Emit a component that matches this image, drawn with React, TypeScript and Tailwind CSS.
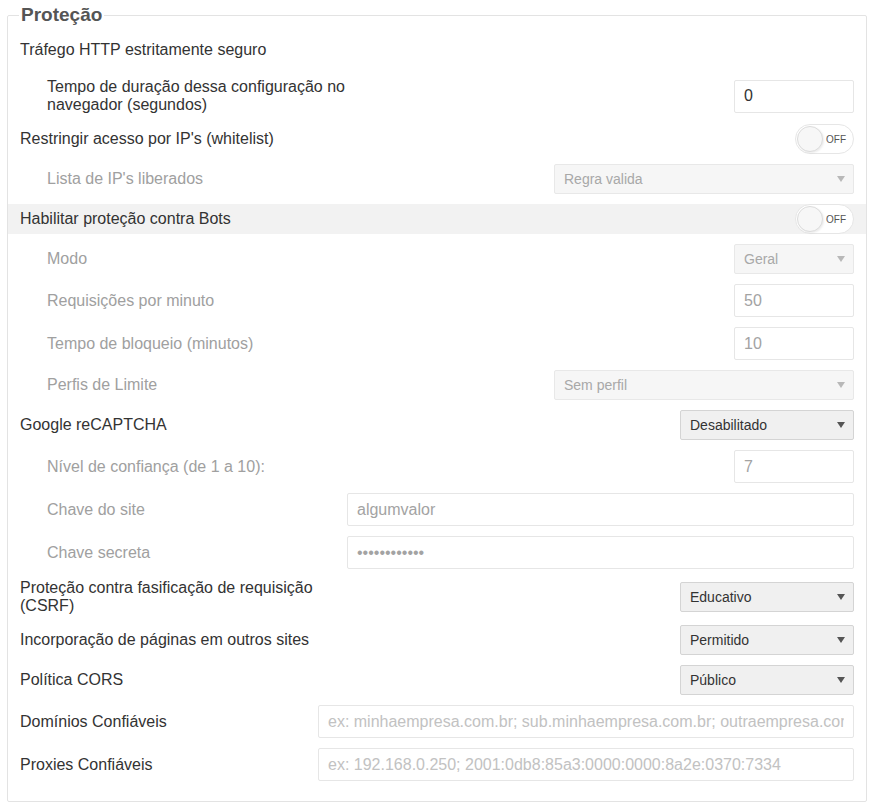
import type { ReactNode } from "react";

const FONT = { fontFamily: '"Liberation Sans", Arial, sans-serif' };

type RowProps = {
  label: ReactNode;
  sub?: boolean;
  muted?: boolean;
  highlight?: boolean;
  className?: string;
  children?: ReactNode;
};

const Row = ({ label, sub, muted, highlight, className, children }: RowProps) => (
  <div
    className={`flex items-center justify-between gap-[8px] pr-[12px] ${
      highlight ? "bg-[#f2f2f2]" : ""
    } ${className ?? ""}`}
  >
    <div
      className={`min-w-0 max-w-[343px] flex-1 text-[16px] leading-[18px] ${
        sub ? "pl-[39px]" : "pl-[12px]"
      } ${muted ? "text-[#a0a0a0]" : "text-[#333]"}`}
    >
      {label}
    </div>
    {children}
  </div>
);

const TextInput = ({
  value,
  placeholder,
  width,
  muted,
  password,
}: {
  value?: string;
  placeholder?: string;
  width: string;
  muted?: boolean;
  password?: boolean;
}) => (
  <input
    readOnly
    type={password ? "password" : "text"}
    value={value ?? ""}
    placeholder={placeholder}
    style={FONT}
    className={`${width} h-[33px] shrink-0 rounded-[2px] border border-[#e6e6e6] bg-white px-[9px] text-[16px] outline-none placeholder:text-[#c2c2c2] ${
      muted ? "text-[#a3a3a3]" : "text-[#333]"
    }`}
  />
);

const Select = ({
  value,
  width,
  disabled,
}: {
  value: string;
  width: string;
  disabled?: boolean;
}) => (
  <div
    className={`${width} flex h-[30px] shrink-0 items-center justify-between rounded-[2px] border pl-[9px] pr-[8px] text-[14px] ${
      disabled
        ? "border-[#e8e8e8] bg-[#f6f6f6] text-[#a8a8a8]"
        : "border-[#d4d4d4] bg-[#f0f0f0] text-[#333]"
    }`}
  >
    <span>{value}</span>
    <svg width="8" height="6" viewBox="0 0 8 6">
      <path d="M0 0h8L4 6z" fill={disabled ? "#b8b8b8" : "#555"} />
    </svg>
  </div>
);

const Toggle = () => (
  <div className="flex h-[30px] w-[59px] shrink-0 items-center justify-between rounded-full border border-[#e6e6e6] bg-white pl-[1px] pr-[7px]">
    <div className="h-[26px] w-[26px] rounded-full border border-[#dcdcdc] bg-[#f7f7f7] shadow-[1px_1px_2px_rgba(0,0,0,0.08)]" />
    <span className="text-[10px] text-[#555]">OFF</span>
  </div>
);

export default function App() {
  return (
    <div style={FONT} className="min-h-screen bg-white pt-[4px]">
      <fieldset className="ml-[7px] w-[860px] min-w-0 rounded-[2px] border border-[#e3e3e3] pb-[20px]">
        <legend className="ml-[11px] px-[2px] text-[19px] font-bold leading-[22px] text-[#555]">
          Proteção
        </legend>

        <div className="flex flex-col gap-[10px] pt-[8px]">
          <Row label="Tráfego HTTP estritamente seguro" className="mb-[4px] h-[30px] pt-[2px]" />

          <Row sub label="Tempo de duração dessa configuração no navegador (segundos)" className="h-[36px]">
            <TextInput value="0" width="w-[120px]" />
          </Row>

          <Row label="Restringir acesso por IP's (whitelist)">
            <Toggle />
          </Row>

          <Row sub muted label="Lista de IP's liberados">
            <Select value="Regra valida" width="w-[300px]" disabled />
          </Row>

          <Row highlight label="Habilitar proteção contra Bots">
            <Toggle />
          </Row>

          <Row sub muted label="Modo">
            <Select value="Geral" width="w-[120px]" disabled />
          </Row>

          <Row sub muted label="Requisições por minuto">
            <TextInput value="50" width="w-[120px]" muted />
          </Row>

          <Row sub muted label="Tempo de bloqueio (minutos)">
            <TextInput value="10" width="w-[120px]" muted />
          </Row>

          <Row sub muted label="Perfis de Limite">
            <Select value="Sem perfil" width="w-[300px]" disabled />
          </Row>

          <Row label="Google reCAPTCHA">
            <Select value="Desabilitado" width="w-[174px]" />
          </Row>

          <Row sub muted label="Nível de confiança (de 1 a 10):">
            <TextInput value="7" width="w-[120px]" muted />
          </Row>

          <Row sub muted label="Chave do site">
            <TextInput value="algumvalor" width="w-[507px]" muted />
          </Row>

          <Row sub muted label="Chave secreta">
            <TextInput value="chavesecreta" width="w-[507px]" muted password />
          </Row>

          <Row label="Proteção contra fasificação de requisição (CSRF)" className="h-[36px]">
            <Select value="Educativo" width="w-[174px]" />
          </Row>

          <Row label="Incorporação de páginas em outros sites">
            <Select value="Permitido" width="w-[174px]" />
          </Row>

          <Row label="Política CORS">
            <Select value="Público" width="w-[174px]" />
          </Row>

          <Row label="Domínios Confiáveis">
            <TextInput
              width="w-[536px]"
              placeholder="ex: minhaempresa.com.br; sub.minhaempresa.com.br; outraempresa.com"
            />
          </Row>

          <Row label="Proxies Confiáveis">
            <TextInput
              width="w-[536px]"
              placeholder="ex: 192.168.0.250; 2001:0db8:85a3:0000:0000:8a2e:0370:7334"
            />
          </Row>
        </div>
      </fieldset>
    </div>
  );
}
